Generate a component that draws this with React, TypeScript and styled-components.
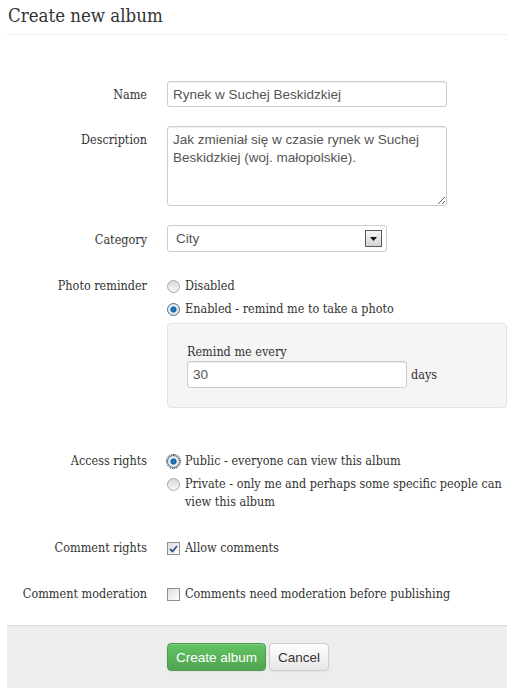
import styled, { createGlobalStyle } from 'styled-components';

const GlobalStyle = createGlobalStyle`
  html, body {
    margin: 0;
    padding: 0;
    background: #ffffff;
  }
  body {
    font-family: "DejaVu Serif Condensed", "DejaVu Serif", Georgia, serif;
    font-size: 12.5px;
    line-height: 18px;
    color: #333333;
  }
`;

const Page = styled.div`
  width: 500px;
  margin: 0 7px;
`;

const Title = styled.h1`
  margin: 0;
  padding: 4px 0 0 1px;
  height: 30px;
  font-family: "DejaVu Serif Condensed", "DejaVu Serif", Georgia, serif;
  font-size: 18.5px;
  font-weight: 400;
  line-height: 24px;
  color: #333333;
  border-bottom: 1px solid #eeeeee;
`;

const Form = styled.form`
  padding-top: 46px;
`;

const Group = styled.div<{ $gap?: number }>`
  display: flex;
  margin-bottom: ${(p) => p.$gap ?? 18}px;
`;

const Label = styled.label<{ $top?: number }>`
  flex: 0 0 140px;
  padding-top: ${(p) => p.$top ?? 5}px;
  margin-right: 20px;
  text-align: right;
  line-height: 18px;
  white-space: nowrap;
  color: #333333;
`;

const Controls = styled.div`
  flex: 1;
  display: flex;
  flex-direction: column;
  align-items: flex-start;
`;

const TextInput = styled.input<{ $width: number; $height?: number }>`
  box-sizing: border-box;
  width: ${(p) => p.$width}px;
  height: ${(p) => p.$height ?? 26}px;
  padding: 3px 5px;
  border: 1px solid #cccccc;
  border-radius: 3px;
  box-shadow: inset 0 1px 1px rgba(0, 0, 0, 0.075);
  font-family: "Liberation Sans", Arial, sans-serif;
  font-size: 13.5px;
  color: #555555;
  background: #ffffff;
  outline: none;
`;

const TextArea = styled.textarea`
  box-sizing: border-box;
  width: 280px;
  height: 80px;
  padding: 4px 5px;
  border: 1px solid #cccccc;
  border-radius: 3px;
  box-shadow: inset 0 1px 1px rgba(0, 0, 0, 0.075);
  font-family: "Liberation Sans", Arial, sans-serif;
  font-size: 13.5px;
  line-height: 18px;
  color: #555555;
  resize: both;
  outline: none;
`;

const SelectBox = styled.div`
  box-sizing: border-box;
  display: flex;
  align-items: center;
  justify-content: space-between;
  width: 220px;
  height: 27px;
  padding: 0 4px 0 8px;
  border: 1px solid #cccccc;
  border-radius: 3px;
  font-family: "Liberation Sans", Arial, sans-serif;
  font-size: 13.5px;
  color: #555555;
  background: #ffffff;
`;

const SelectArrow = styled.span`
  box-sizing: border-box;
  display: flex;
  align-items: center;
  justify-content: center;
  width: 17px;
  height: 17px;
  border: 1px solid #5a5a5a;
  background: linear-gradient(#f4f4f4, #d6d6d6);
`;

const Choice = styled.label<{ $gap?: number }>`
  display: flex;
  align-items: flex-start;
  margin-top: ${(p) => p.$gap ?? 0}px;
  line-height: 18px;
  color: #333333;
`;

const RadioDot = styled.span<{ $on?: boolean; $focus?: boolean }>`
  box-sizing: border-box;
  flex: 0 0 13px;
  width: 13px;
  height: 13px;
  margin: 3px 5px 0 0;
  border-radius: 50%;
  border: 1px solid ${(p) => (p.$on ? '#4f6d8c' : '#a8a8a8')};
  background: ${(p) =>
    p.$on
      ? 'radial-gradient(circle, #1e8ad6 0, #0b5fa5 2.5px, #e4e4e4 3.5px, #f7f7f7 100%)'
      : 'linear-gradient(#d8d8d8, #f8f8f8)'};
  outline: ${(p) => (p.$focus ? '1px dotted #222' : 'none')};
  outline-offset: 0;
`;

const CheckBox = styled.span`
  box-sizing: border-box;
  display: flex;
  align-items: center;
  justify-content: center;
  flex: 0 0 13px;
  width: 13px;
  height: 13px;
  margin: 3px 5px 0 0;
  border: 1px solid #8f8f8f;
  background: linear-gradient(135deg, #dcdcdc, #ffffff);
`;

const Well = styled.div`
  box-sizing: border-box;
  width: 340px;
  margin-top: 5px;
  padding: 19px;
  background: #f5f5f5;
  border: 1px solid #e3e3e3;
  border-radius: 4px;
`;

const WellLabel = styled.div`
  line-height: 18px;
  color: #333333;
`;

const InlineRow = styled.div`
  display: flex;
  align-items: center;
  gap: 4px;
`;

const Actions = styled.div`
  display: flex;
  gap: 3px;
  margin-top: 22px;
  padding: 17px 0 17px 160px;
  background: #ededed;
  border-top: 1px solid #dddddd;
`;

const Button = styled.button<{ $primary?: boolean }>`
  height: 28px;
  padding: 0 8px;
  border-radius: 4px;
  font-family: "Liberation Sans", Arial, sans-serif;
  font-size: 13.5px;
  cursor: pointer;
  color: ${(p) => (p.$primary ? '#ffffff' : '#333333')};
  border: 1px solid ${(p) => (p.$primary ? '#4c9a4c' : '#cccccc')};
  background: ${(p) =>
    p.$primary
      ? 'linear-gradient(#62c462, #51a351)'
      : 'linear-gradient(#ffffff, #e6e6e6)'};
  box-shadow: inset 0 1px 0 rgba(255, 255, 255, 0.2), 0 1px 2px rgba(0, 0, 0, 0.05);
`;

function App() {
  return (
    <Page>
      <GlobalStyle />
      <Title>Create new album</Title>
      <Form>
        <Group $gap={19}>
          <Label $top={5}>Name</Label>
          <Controls>
            <TextInput $width={280} defaultValue="Rynek w Suchej Beskidzkiej" />
          </Controls>
        </Group>

        <Group $gap={19}>
          <Label $top={5}>Description</Label>
          <Controls>
            <TextArea defaultValue="Jak zmieniał się w czasie rynek w Suchej Beskidzkiej (woj. małopolskie)." />
          </Controls>
        </Group>

        <Group $gap={25}>
          <Label $top={6}>Category</Label>
          <Controls>
            <SelectBox>
              <span>City</span>
              <SelectArrow>
                <svg width="7" height="4" viewBox="0 0 7 4">
                  <path d="M0 0h7L3.5 4z" fill="#111" />
                </svg>
              </SelectArrow>
            </SelectBox>
          </Controls>
        </Group>

        <Group $gap={44}>
          <Label $top={0}>Photo reminder</Label>
          <Controls>
            <Choice>
              <RadioDot />
              Disabled
            </Choice>
            <Choice $gap={5}>
              <RadioDot $on />
              Enabled - remind me to take a photo
            </Choice>
            <Well>
              <WellLabel>Remind me every</WellLabel>
              <InlineRow>
                <TextInput $width={220} $height={27} defaultValue="30" />
                <span>days</span>
              </InlineRow>
            </Well>
          </Controls>
        </Group>

        <Group $gap={28}>
          <Label $top={0}>Access rights</Label>
          <Controls>
            <Choice>
              <RadioDot $on $focus />
              Public - everyone can view this album
            </Choice>
            <Choice $gap={5}>
              <RadioDot />
              <span>Private - only me and perhaps some specific people can view this album</span>
            </Choice>
          </Controls>
        </Group>

        <Group $gap={28}>
          <Label $top={0}>Comment rights</Label>
          <Controls>
            <Choice>
              <CheckBox>
                <svg width="9" height="8" viewBox="0 0 9 8">
                  <path d="M1 4l2.5 2.5L8 1" fill="none" stroke="#2f4f8f" strokeWidth="1.8" />
                </svg>
              </CheckBox>
              Allow comments
            </Choice>
          </Controls>
        </Group>

        <Group $gap={0}>
          <Label $top={0}>Comment moderation</Label>
          <Controls>
            <Choice>
              <CheckBox />
              Comments need moderation before publishing
            </Choice>
          </Controls>
        </Group>

        <Actions>
          <Button $primary type="button">Create album</Button>
          <Button type="button">Cancel</Button>
        </Actions>
      </Form>
    </Page>
  );
}

export default App;
